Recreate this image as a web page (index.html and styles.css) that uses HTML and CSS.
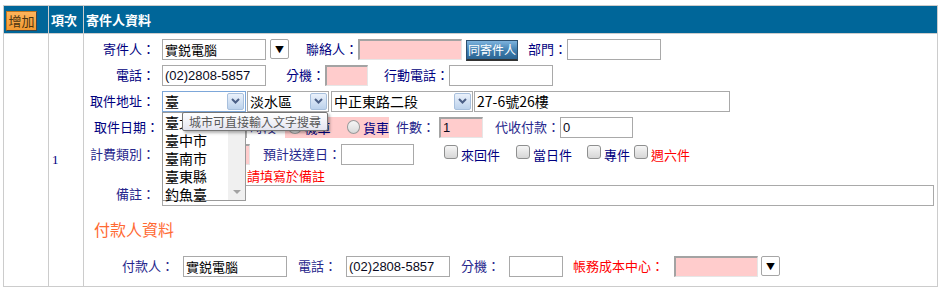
FILE: index.html
```html
<!DOCTYPE html>
<html lang="zh-Hant">
<head>
    <meta charset="UTF-8">
    <title>寄件人資料</title>
    <link rel="stylesheet" href="styles.css">
</head>
<body>
    <div class="sheet">
        <!-- header row -->
        <div class="hc c1"><span class="add-btn">增加</span></div>
        <div class="hc c2">項次</div>
        <div class="hc c3">寄件人資料</div>

        <!-- body row -->
        <div class="bc c1"></div>
        <div class="bc c2 idx">1</div>
        <div class="bc c3 form">
            <div class="row">
                <span class="lbl">寄件人：</span>
                <input class="txt ml5 w104" type="text" value="實鋭電腦">
                <span class="pick ml4">▼</span>
                <span class="cap ml17">聯絡人：</span>
                <input class="txt pink w104" type="text" value="">
                <span class="blue-btn ml4">同寄件人</span>
                <span class="cap ml10">部門：</span>
                <input class="txt w94" type="text" value="">
            </div>
            <div class="row">
                <span class="lbl">電話：</span>
                <input class="txt ml5 w104 num" type="text" value="(02)2808-5857">
                <span class="cap ml20">分機：</span>
                <input class="txt pink w43" type="text" value="">
                <span class="cap ml16">行動電話：</span>
                <input class="txt w104" type="text" value="">
            </div>
            <div class="row">
                <span class="lbl">取件地址：</span>
                <div class="sel focus ml5 w84">
                    <span class="val">臺</span>
                    <span class="arr"><svg width="9" height="6" viewBox="0 0 9 6"><path d="M1 1 L4.5 4.5 L8 1" fill="none" stroke="#4b5f86" stroke-width="2"/></svg></span>
                    <div class="drop">
                        <div class="opt">臺北市</div>
                        <div class="opt">臺中市</div>
                        <div class="opt">臺南市</div>
                        <div class="opt">臺東縣</div>
                        <div class="opt">釣魚臺</div>
                        <span class="scroll"><span class="down"></span></span>
                    </div>
                    <div class="tip">城市可直接輸入文字搜尋</div>
                </div>
                <div class="sel ml1 w82">
                    <span class="val">淡水區</span>
                    <span class="arr"><svg width="9" height="6" viewBox="0 0 9 6"><path d="M1 1 L4.5 4.5 L8 1" fill="none" stroke="#4b5f86" stroke-width="2"/></svg></span>
                </div>
                <div class="sel ml2 w142">
                    <span class="val">中正東路二段</span>
                    <span class="arr"><svg width="9" height="6" viewBox="0 0 9 6"><path d="M1 1 L4.5 4.5 L8 1" fill="none" stroke="#4b5f86" stroke-width="2"/></svg></span>
                </div>
                <input class="txt big ml1 w256" type="text" value="27-6號26樓">
            </div>
            <div class="row">
                <span class="lbl w75">取件日期：</span>
                <input class="txt ml1 w85" type="text" value="">
                <span class="cap ml3 thin">時段</span>
                <span class="radios ml9">
                    <span class="radio"></span><span class="rl">機車</span>
                    <span class="radio ml16"></span><span class="rl">貨車</span>
                </span>
                <span class="cap thin ml7">件數：</span>
                <input class="txt pink ml4 w44 num" type="text" value="1">
                <span class="cap thin ml12">代收付款：</span>
                <input class="txt w73 num" type="text" value="0">
            </div>
            <div class="row r5">
                <span class="lbl thin">計費類別：</span>
                <span class="txt pink ml5 w88"></span>
                <span class="cap thin ml13">預計送達日：</span>
                <input class="txt w73" type="text" value="">
                <span class="chk ml30"></span><span class="cl">來回件</span>
                <span class="chk ml16"></span><span class="cl">當日件</span>
                <span class="chk ml15"></span><span class="cl">專件</span>
                <span class="chk ml4"></span><span class="cl red">週六件</span>
            </div>
            <div class="note">請填寫於備註</div>
            <div class="row memo">
                <span class="lbl thin">備註：</span>
                <textarea class="area ml5"></textarea>
            </div>
            <h3 class="sub">付款人資料</h3>
            <div class="row">
                <span class="cap thin ml38">付款人：</span>
                <input class="txt ml9 w104" type="text" value="實鋭電腦">
                <span class="cap thin ml11">電話：</span>
                <input class="txt ml9 w104 num" type="text" value="(02)2808-5857">
                <span class="cap thin ml11">分機：</span>
                <input class="txt ml9 w54" type="text" value="">
                <span class="cap thin red ml10">帳務成本中心：</span>
                <input class="txt pink ml10 w84" type="text" value="">
                <span class="pick ml3">▼</span>
            </div>
        </div>
    </div>
</body>
</html>
```

FILE: styles.css
```css
body {
    margin: 0;
    font-family: "Noto Sans CJK TC", sans-serif;
    font-size: 13px;
    background: #fff;
}
.sheet {
    margin: 5px 0 0 3px;
    width: 935px;
    box-sizing: border-box;
    border: 1px solid #ccc;
    display: grid;
    grid-template-columns: 45px 35px 1fr;
    grid-template-rows: 28px 252px;
}
.hc {
    background: #006699;
    color: #fff;
    font-weight: bold;
    border-bottom: 1px solid #ccc;
    display: flex;
    align-items: center;
    line-height: 16px;
}
.c1, .c2 {
    border-right: 1px solid #ccc;
}
.hc.c2, .hc.c3 {
    padding-left: 2px;
}
.add-btn {
    display: inline-block;
    margin: 2px 0 0 2px;
    width: 31px;
    height: 20px;
    box-sizing: border-box;
    background: linear-gradient(#fdb45c, #f29a32);
    border: 1px solid #c2771d;
    border-right-color: #444;
    border-bottom-color: #444;
    color: #4a3411;
    font-weight: normal;
    font-size: 13px;
    line-height: 18px;
    text-align: center;
}
.idx {
    display: flex;
    align-items: center;
    padding-left: 3px;
    color: #000080;
    font-family: "Liberation Serif", serif;
    font-size: 13px;
}
.form {
    padding-top: 2px;
}
.row {
    display: flex;
    align-items: center;
    height: 26px;
    white-space: nowrap;
}
.r5 {
    margin-top: 1px;
}
.lbl {
    width: 71px;
    padding-right: 2px;
    text-align: right;
    color: #000080;
    line-height: 16px;
}
.cap {
    color: #000080;
    line-height: 16px;
}
.thin {
    color: #26268c;
}
.red {
    color: #f00;
}
.txt {
    display: inline-block;
    box-sizing: border-box;
    height: 21px;
    border: 1px solid #a9a9a9;
    padding: 0 2px;
    margin: 0;
    font-family: "Noto Sans CJK TC", sans-serif;
    font-size: 13px;
    color: #000;
    background: #fff;
    outline: none;
}
.txt.num {
    font-family: "Liberation Sans", sans-serif;
    font-size: 13px;
    color: #0a0a20;
}
.txt.big {
    font-size: 14px;
}
.pink {
    background: #ffcccc;
    border-top: 2px solid #a3a3a3;
    border-left: 2px solid #a3a3a3;
    border-right: 1px solid #e6e6e6;
    border-bottom: 1px solid #e6e6e6;
}
.pick {
    display: inline-flex;
    align-items: center;
    justify-content: center;
    width: 19px;
    height: 20px;
    box-sizing: border-box;
    border: 1px solid #a6a6a6;
    border-radius: 2px;
    background: #fff;
    font-size: 9px;
    color: #000;
}
.blue-btn {
    display: inline-block;
    width: 52px;
    height: 21px;
    box-sizing: border-box;
    margin-top: 2px;
    background: linear-gradient(#7db3dd, #3d7cad 55%, #2b6492);
    border: 1px solid #2b4f6e;
    border-bottom: 2px solid #333;
    color: #fff;
    font-size: 12px;
    line-height: 18px;
    text-align: center;
}
.sel {
    position: relative;
    display: flex;
    align-items: center;
    height: 21px;
    box-sizing: border-box;
    border: 1px solid #a9a9a9;
    background: #fff;
    font-size: 14px;
    line-height: 18px;
    color: #000;
}
.sel.focus {
    border-color: #7da7d9;
}
.sel .val {
    flex: 1;
    padding-left: 2px;
    overflow: hidden;
}
.sel .arr {
    display: flex;
    align-items: center;
    justify-content: center;
    width: 17px;
    height: 17px;
    margin-right: 1px;
    box-sizing: border-box;
    border: 1px solid #a8c0dd;
    border-radius: 2px;
    background: linear-gradient(#eaf1fb, #bcd2ec);
}
.drop {
    position: absolute;
    left: -1px;
    top: 20px;
    width: 84px;
    height: 89px;
    box-sizing: border-box;
    border: 1px solid #9a9a9a;
    background: #fff;
    z-index: 2;
}
.opt {
    height: 18px;
    line-height: 18px;
    padding-left: 2px;
    font-size: 14px;
}
.scroll {
    position: absolute;
    right: 0;
    top: 0;
    bottom: 0;
    width: 17px;
    background: #f0f0f0;
}
.down {
    position: absolute;
    left: 5px;
    bottom: 6px;
    border-left: 4px solid transparent;
    border-right: 4px solid transparent;
    border-top: 4px solid #a3a3a3;
}
.tip {
    position: absolute;
    left: 19px;
    top: 20px;
    height: 19px;
    box-sizing: border-box;
    padding: 0 6px;
    border: 1px solid #767676;
    border-radius: 2px;
    background: linear-gradient(#ffffff, #e4e5f0);
    box-shadow: 2px 2px 3px rgba(0, 0, 0, 0.3);
    color: #575757;
    font-size: 12px;
    line-height: 17px;
    white-space: nowrap;
    z-index: 3;
}
.radios {
    display: inline-flex;
    align-items: center;
    width: 104px;
    height: 21px;
    background: #ffcccc;
}
.radio {
    display: inline-block;
    width: 12px;
    height: 12px;
    margin-left: 3px;
    border: 1px solid #9a9a9a;
    border-radius: 50%;
    background: linear-gradient(#f6f6f6, #d9d9d9);
}
.radio.ml16 {
    margin-left: 16px;
}
.rl {
    margin-left: 3px;
    color: #000080;
}
.chk {
    display: inline-block;
    width: 12px;
    height: 12px;
    border: 1px solid #8e8f8f;
    border-radius: 3px;
    background: linear-gradient(#f6f6f6, #d6d6d6);
    margin-top: -4px;
}
.cl {
    margin-left: 3px;
    color: #000080;
}
.cl.red {
    color: #f00;
}
.note {
    margin-left: 163px;
    height: 18px;
    line-height: 18px;
    color: #f00;
}
.memo {
    height: 23px;
    align-items: flex-start;
}
.memo .lbl {
    margin-top: 1px;
}
.area {
    width: 772px;
    height: 21px;
    box-sizing: border-box;
    margin: 0;
    border: 1px solid #a9a9a9;
    resize: none;
    padding: 0;
}
.sub {
    margin: 10px 0 0 10px;
    height: 22px;
    line-height: 22px;
    font-size: 16px;
    font-weight: normal;
    color: #ff6a33;
}
.sub + .row {
    margin-top: 13px;
}

.ml1 { margin-left: 1px; }
.ml2 { margin-left: 2px; }
.ml3 { margin-left: 3px; }
.ml4 { margin-left: 4px; }
.ml5 { margin-left: 5px; }
.ml7 { margin-left: 7px; }
.ml9 { margin-left: 9px; }
.ml10 { margin-left: 10px; }
.ml11 { margin-left: 11px; }
.ml12 { margin-left: 12px; }
.ml13 { margin-left: 13px; }
.ml15 { margin-left: 15px; }
.ml16 { margin-left: 16px; }
.ml17 { margin-left: 17px; }
.ml20 { margin-left: 20px; }
.ml30 { margin-left: 30px; }
.ml38 { margin-left: 38px; }

.w43 { width: 43px; }
.w44 { width: 44px; }
.w54 { width: 54px; }
.w73 { width: 73px; }
.w75 { width: 75px; }
.w82 { width: 82px; }
.w84 { width: 84px; }
.w85 { width: 85px; }
.w88 { width: 88px; }
.w94 { width: 94px; }
.w104 { width: 104px; }
.w142 { width: 142px; }
.w256 { width: 256px; }
```
